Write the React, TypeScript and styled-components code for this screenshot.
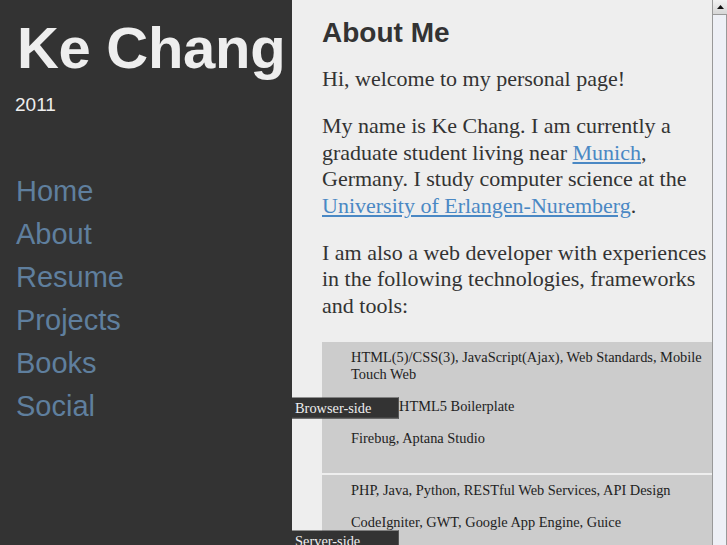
import * as React from "react"
import styled, { createGlobalStyle } from "styled-components"

const GlobalStyle = createGlobalStyle`
  html, body {
    margin: 0;
    padding: 0;
    overflow: hidden;
  }
  body {
    background: #333;
  }
`

const Page = styled.div`
  display: flex;
  width: 727px;
  height: 545px;
  overflow: hidden;
`

const Sidebar = styled.aside`
  flex: 0 0 292px;
  background: #333;
  padding: 15px 0 0 16px;
  box-sizing: border-box;
  font-family: "Liberation Sans", Arial, sans-serif;
`

const Title = styled.h1`
  margin: 0 0 0 1px;
  font-size: 58px;
  font-weight: bold;
  line-height: 66px;
  color: #eee;
  letter-spacing: -0.3px;
  white-space: nowrap;
`

const Year = styled.div`
  margin: 13px 0 0 -1px;
  font-size: 19px;
  color: #eee;
`

const Nav = styled.nav`
  display: flex;
  flex-direction: column;
  margin-top: 54px;
`

const NavLink = styled.a`
  font-size: 29px;
  line-height: 43px;
  color: #5f7f9e;
  text-decoration: none;
`

const Main = styled.main`
  flex: 1;
  background: #eee;
  padding: 15px 0 0 30px;
  overflow: hidden;
  color: #333;
`

const Heading = styled.h2`
  margin: 0;
  font-family: "Liberation Sans", Arial, sans-serif;
  font-size: 28px;
  font-weight: bold;
  line-height: 36px;
`

const Para = styled.p`
  margin: 15px 0 21px;
  font-family: "Liberation Serif", "Times New Roman", serif;
  font-size: 22px;
  line-height: 26.4px;
`

const Link = styled.a`
  color: #4a88c4;
  text-decoration: underline;
`

const Skills = styled.div`
  display: flex;
  flex-direction: column;
  gap: 2px;
  margin-top: 23px;
`

const Group = styled.section`
  position: relative;
  background: #ccc;
  padding: 7px 8px 26px 29px;
  display: flex;
  flex-direction: column;
  gap: 15px;
  font-family: "Liberation Serif", "Times New Roman", serif;
  font-size: 14.4px;
  line-height: 17px;
  color: #222;
`

const GroupItem = styled.div<{ $indent?: number }>`
  min-height: 17px;
  padding-left: ${p => p.$indent || 0}px;
`

const Label = styled.span`
  position: absolute;
  left: -30px;
  top: 50%;
  transform: translateY(-50%);
  width: 103px;
  height: 20px;
  padding-left: 3px;
  background: #333;
  border-right: 1px solid #555;
  border-bottom: 1px solid #555;
  color: #eee;
  font-size: 14.4px;
  line-height: 20px;
`

const Scrollbar = styled.div`
  flex: 0 0 15px;
  display: flex;
  flex-direction: column;
  background: #eef0f6;
  border-left: 1px solid #999;
  box-sizing: border-box;
`

const ScrollButton = styled.div`
  height: 14px;
  display: flex;
  align-items: center;
  justify-content: center;
  background: linear-gradient(#f2f2f2, #d6d6d6);
  border-bottom: 1px solid #999;
`

const Thumb = styled.div`
  flex: 1;
  border-right: 1px solid #999;
  background: #eef0f6;
`

const groups = [
  {
    label: "Browser-side",
    items: [
      { text: "HTML(5)/CSS(3), JavaScript(Ajax), Web Standards, Mobile Touch Web" },
      { text: "HTML5 Boilerplate", indent: 48 },
      { text: "Firebug, Aptana Studio" },
    ],
  },
  {
    label: "Server-side",
    items: [
      { text: "PHP, Java, Python, RESTful Web Services, API Design" },
      { text: "CodeIgniter, GWT, Google App Engine, Guice" },
      { text: "Eclipse, NetBeans, Apache, MySQL, Git, SVN, Linux, Shell Scripting, Regular Expressions" },
    ],
  },
]

export default function App() {
  return (
    <>
      <GlobalStyle />
      <Page>
        <Sidebar>
          <Title>Ke Chang</Title>
          <Year>2011</Year>
          <Nav>
            {["Home", "About", "Resume", "Projects", "Books", "Social"].map(n => (
              <NavLink key={n} href="#">{n}</NavLink>
            ))}
          </Nav>
        </Sidebar>
        <Main>
          <Heading>About Me</Heading>
          <Para>Hi, welcome to my personal page!</Para>
          <Para>
            My name is Ke Chang. I am currently a graduate student living near{" "}
            <Link href="#">Munich</Link>, Germany. I study computer science at the{" "}
            <Link href="#">University of Erlangen-Nuremberg</Link>.
          </Para>
          <Para>
            I am also a web developer with experiences in the following technologies, frameworks
            and tools:
          </Para>
          <Skills>
            {groups.map(g => (
              <Group key={g.label}>
                <Label>{g.label}</Label>
                {g.items.map(i => (
                  <GroupItem key={i.text} $indent={i.indent}>{i.text}</GroupItem>
                ))}
              </Group>
            ))}
          </Skills>
        </Main>
        <Scrollbar>
          <ScrollButton>
            <svg width="7" height="4" viewBox="0 0 7 4">
              <path d="M0 4 L3.5 0 L7 4 Z" fill="#111" />
            </svg>
          </ScrollButton>
          <Thumb />
        </Scrollbar>
      </Page>
    </>
  )
}
